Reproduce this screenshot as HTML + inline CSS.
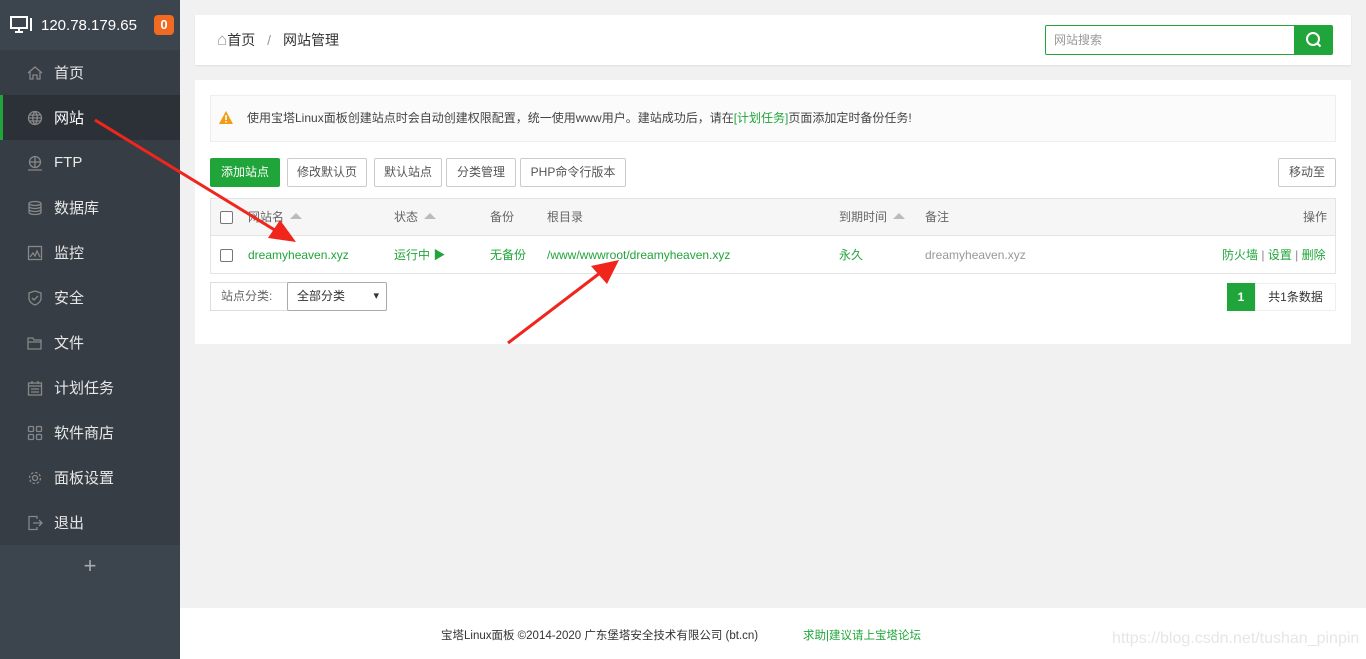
<!DOCTYPE html>
<html><head><meta charset="utf-8"><style>
*{box-sizing:border-box;margin:0;padding:0}
body{width:1366px;height:659px;overflow:hidden;background:#f1f1f1;font-family:"Liberation Sans","Noto Sans CJK SC",sans-serif;font-size:12px;color:#555;position:relative}
.side{position:absolute;left:0;top:0;width:180px;height:659px;background:#3c444d}
.side .hd{height:50px;display:flex;align-items:center;color:#fff;font-size:15px;padding-left:10px}
.badge{position:absolute;left:154px;top:15px;width:20px;height:20px;background:#f06a22;color:#fff;border-radius:4px;font-size:13px;font-weight:bold;text-align:center;line-height:20px}
.menu{position:absolute;top:50px;left:0;width:180px;height:495px;background:#363d45}
.mi{height:45px;display:flex;align-items:center;padding-left:27px;color:#e8e8e8;font-size:15px}
.mi svg{width:16px;height:16px;margin-right:11px;stroke:#888;fill:none;stroke-width:1.3}
.mi.act{background:#2c3138;border-left:3px solid #20a53a;padding-left:24px;color:#fff}
.plus{position:absolute;top:553px;left:0;width:180px;text-align:center;color:#aaa;font-size:22px}
.card{position:absolute;background:#fff;left:195px;width:1156px}
.btn{position:absolute;top:158px;height:29px;border:1px solid #ccc;border-radius:2px;background:#fff;color:#555;font-size:12px;line-height:27px;text-align:center}
.g{color:#20a53a}
.tri{display:inline-block;width:0;height:0;border-left:6px solid transparent;border-right:6px solid transparent;border-bottom:6px solid #bbb;margin-left:6px;vertical-align:2px}
.cb{position:absolute;width:13px;height:13px;border:1px solid #777;border-radius:2px;background:#fff}
.abs{position:absolute;white-space:nowrap}
.th{position:absolute;top:198px;height:38px;line-height:38px;color:#666;white-space:nowrap}
.td{position:absolute;top:236px;height:38px;line-height:38px;white-space:nowrap}
</style></head><body>
<div class="side">
<div class="hd"><svg width="24" height="20" viewBox="0 0 24 20" fill="none" stroke="#fff" stroke-width="2"><rect x="1" y="2" width="16" height="11"/><path d="M9 13v3M5 17h8"/><rect x="20" y="3" width="2" height="13" fill="#fff" stroke="none"/></svg><span style="margin-left:7px">120.78.179.65</span></div>
<div class="badge">0</div>
<div class="menu">
<div class="mi"><svg viewBox="0 0 16 16"><path d="M1 8L8 2l7 6M3 7v7h3v-4h4v4h3V7"/></svg>首页</div>
<div class="mi act"><svg viewBox="0 0 16 16"><circle cx="8" cy="8" r="6.5"/><path d="M1.5 8h13M8 1.5c-3 3-3 10 0 13M8 1.5c3 3 3 10 0 13M2.5 5h11M2.5 11h11"/></svg>网站</div>
<div class="mi"><svg viewBox="0 0 16 16"><circle cx="8" cy="7" r="5.5"/><path d="M2.5 7h11M8 1.5v11M1 15h14"/></svg>FTP</div>
<div class="mi"><svg viewBox="0 0 16 16"><ellipse cx="8" cy="3.5" rx="6" ry="2"/><path d="M2 3.5v9c0 1 2.7 2 6 2s6-1 6-2v-9M2 6.5c0 1 2.7 2 6 2s6-1 6-2M2 9.5c0 1 2.7 2 6 2s6-1 6-2"/></svg>数据库</div>
<div class="mi"><svg viewBox="0 0 16 16"><rect x="1.5" y="1.5" width="13" height="13"/><path d="M3 12l3-4 2 3 2-5 3 6"/></svg>监控</div>
<div class="mi"><svg viewBox="0 0 16 16"><path d="M8 1l6 2v5c0 3.5-3 6-6 7-3-1-6-3.5-6-7V3z M5 8l2 2 4-4"/></svg>安全</div>
<div class="mi"><svg viewBox="0 0 16 16"><path d="M1 3h5l1 2h7v9H1z M1 7h13"/></svg>文件</div>
<div class="mi"><svg viewBox="0 0 16 16"><rect x="1.5" y="3" width="13" height="12"/><path d="M1.5 6h13M5 1v3M11 1v3M4 9h8M4 12h8"/></svg>计划任务</div>
<div class="mi"><svg viewBox="0 0 16 16"><rect x="1.5" y="1.5" width="5" height="5" rx="1"/><rect x="9.5" y="1.5" width="5" height="5" rx="1"/><rect x="1.5" y="9.5" width="5" height="5" rx="1"/><rect x="9.5" y="9.5" width="5" height="5" rx="1"/></svg>软件商店</div>
<div class="mi"><svg viewBox="0 0 16 16"><circle cx="8" cy="8" r="2.5"/><circle cx="8" cy="8" r="5.5" stroke-dasharray="2.5 1.8"/></svg>面板设置</div>
<div class="mi"><svg viewBox="0 0 16 16"><path d="M10 4V1.5H2v13h8V12M6 8h9M12 5l3 3-3 3"/></svg>退出</div>
</div>
<div class="plus">+</div>
</div>

<div class="card" style="top:15px;height:50px;box-shadow:0 1px 2px rgba(0,0,0,.08)">
<div class="abs" style="left:22px;top:0;line-height:50px;font-size:14px;color:#333"><span style="color:#999;font-size:17px">⌂</span>首页 <span style="color:#999;margin:0 8px">/</span> 网站管理</div>
<div class="abs" style="left:850px;top:10px;width:250px;height:30px;border:1px solid #20a53a;border-radius:2px 0 0 2px;padding-left:8px;line-height:28px;color:#999">网站搜索</div>
<div class="abs" style="left:1099px;top:10px;width:39px;height:30px;background:#20a53a;border-radius:0 2px 2px 0"><svg width="39" height="30" viewBox="0 0 39 30" fill="none" stroke="#fff" stroke-width="2"><circle cx="19" cy="14" r="6"/><path d="M23.5 18.5l3 3"/></svg></div>
</div>

<div class="card" style="top:80px;height:264px"></div>
<div class="abs" style="left:210px;top:95px;width:1126px;height:47px;background:#fbfbfb;border:1px solid #eee"></div>
<svg class="abs" style="left:219px;top:111px" width="14" height="13" viewBox="0 0 14 13"><path d="M7 0L14 13H0z" fill="#f39c12"/><path d="M7 4v5M7 10v1.5" stroke="#fff" stroke-width="1.6"/></svg>
<div class="abs" style="left:247px;top:95px;line-height:47px;color:#444">使用宝塔Linux面板创建站点时会自动创建权限配置，统一使用www用户。建站成功后，请在<span class="g">[计划任务]</span>页面添加定时备份任务!</div>

<div class="btn" style="left:210px;width:70px;background:#20a53a;border-color:#20a53a;color:#fff">添加站点</div>
<div class="btn" style="left:287px;width:80px">修改默认页</div>
<div class="btn" style="left:374px;width:68px">默认站点</div>
<div class="btn" style="left:446px;width:70px">分类管理</div>
<div class="btn" style="left:520px;width:106px">PHP命令行版本</div>
<div class="btn" style="left:1278px;width:58px">移动至</div>

<div class="abs" style="left:210px;top:198px;width:1126px;height:38px;background:#f6f6f6;border:1px solid #e4e4e4"></div>
<div class="abs" style="left:210px;top:236px;width:1126px;height:38px;background:#fff;border:1px solid #e4e4e4;border-top:none"></div>
<div class="cb" style="left:220px;top:211px"></div>
<div class="cb" style="left:220px;top:249px"></div>
<div class="th" style="left:248px">网站名<span class="tri"></span></div>
<div class="th" style="left:394px">状态<span class="tri"></span></div>
<div class="th" style="left:490px">备份</div>
<div class="th" style="left:547px">根目录</div>
<div class="th" style="left:839px">到期时间<span class="tri"></span></div>
<div class="th" style="left:925px">备注</div>
<div class="th" style="left:1303px">操作</div>
<div class="td g" style="left:248px">dreamyheaven.xyz</div>
<div class="td g" style="left:394px">运行中 ▶</div>
<div class="td g" style="left:490px">无备份</div>
<div class="td g" style="left:547px">/www/wwwroot/dreamyheaven.xyz</div>
<div class="td g" style="left:839px">永久</div>
<div class="td" style="left:925px;color:#999">dreamyheaven.xyz</div>
<div class="td g" style="left:1222px">防火墙<span style="color:#888"> | </span>设置<span style="color:#888"> | </span>删除</div>

<div class="abs" style="left:210px;top:282px;width:78px;height:29px;border:1px solid #ddd;border-right:none;line-height:27px;padding-left:10px;color:#666">站点分类:</div>
<div class="abs" style="left:287px;top:282px;width:100px;height:29px;border:1px solid #aaa;border-radius:2px;line-height:27px;padding-left:9px;color:#333">全部分类<span style="position:absolute;right:7px;top:0;font-size:11px">▾</span></div>
<div class="abs" style="left:1227px;top:283px;width:28px;height:28px;background:#20a53a;color:#fff;text-align:center;line-height:28px;font-weight:bold">1</div>
<div class="abs" style="left:1255px;top:283px;width:81px;height:28px;border:1px solid #eee;background:#fff;text-align:center;line-height:26px;color:#333">共1条数据</div>

<div class="abs" style="left:180px;top:608px;width:1186px;height:51px;background:#fff"></div>
<div class="abs" style="left:441px;top:627px;color:#333;font-size:11.5px">宝塔Linux面板 ©2014-2020 广东堡塔安全技术有限公司 (bt.cn)</div>
<div class="abs g" style="left:803px;top:627px;font-size:11.5px">求助|建议请上宝塔论坛</div>
<div class="abs" style="left:1112px;top:630px;color:#e6e6e6;font-size:16px">https://blog.csdn.net/tushan_pinpin</div>

<svg class="abs" style="left:0;top:0" width="1366" height="659">
<path d="M95 120L278 232" stroke="#f0261c" stroke-width="3"/>
<path d="M296 242L268 238L280 220z" fill="#f0261c"/>
<path d="M508 343L600 273" stroke="#f0261c" stroke-width="3"/>
<path d="M619 260L607 284L591 266z" fill="#f0261c"/>
</svg>
</body></html>
